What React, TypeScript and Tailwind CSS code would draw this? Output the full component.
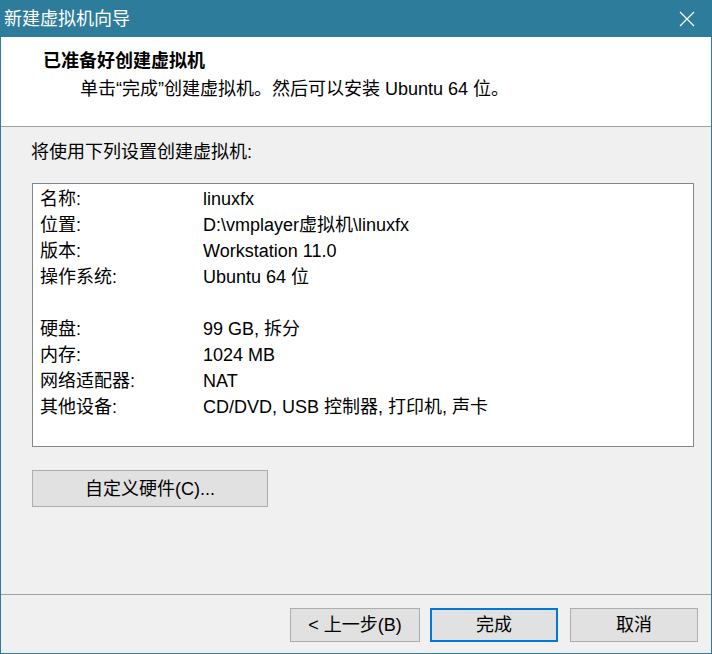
import React from "react";

const font = {
  fontFamily: '"Liberation Sans", "Noto Sans CJK SC", sans-serif',
};

const rows: [string, string][] = [
  ["名称:", "linuxfx"],
  ["位置:", "D:\\vmplayer虚拟机\\linuxfx"],
  ["版本:", "Workstation 11.0"],
  ["操作系统:", "Ubuntu 64 位"],
  ["", ""],
  ["硬盘:", "99 GB, 拆分"],
  ["内存:", "1024 MB"],
  ["网络适配器:", "NAT"],
  ["其他设备:", "CD/DVD, USB 控制器, 打印机, 声卡"],
];

export default function App() {
  return (
    <div
      className="w-[712px] h-[654px] flex flex-col bg-[#f0f0f0] border-x border-b border-[#2e7c9b] text-black text-[18px] overflow-hidden"
      style={font}
    >
      {/* Title bar */}
      <div className="h-[37px] -mx-px bg-[#2e7c9b] flex items-center justify-between shrink-0">
        <span className="pl-[4px] text-white leading-[26px]">新建虚拟机向导</span>
        <svg width="16" height="16" viewBox="0 0 16 16" className="mr-[17px]">
          <path d="M1 1 L15 15 M15 1 L1 15" stroke="white" strokeWidth="1.2" fill="none" />
        </svg>
      </div>

      {/* Header */}
      <div className="h-[89px] bg-white shrink-0 pt-[11px] leading-[26px]">
        <div className="pl-[42px] font-bold">已准备好创建虚拟机</div>
        <div className="pl-[79px] mt-[2px]">单击“完成”创建虚拟机。然后可以安装 Ubuntu 64 位。</div>
      </div>
      <div className="h-px bg-[#a0a0a0] shrink-0" />

      {/* Body */}
      <div className="flex-1 flex flex-col pl-[31px] pt-[12px]">
        <div className="leading-[26px] -ml-px">将使用下列设置创建虚拟机:</div>
        <div className="mt-[18px] w-[662px] h-[264px] bg-white border border-[#828790] pt-[2px] pl-[7px]">
          <div className="grid grid-cols-[163px_1fr] leading-[26px]">
            {rows.map(([k, v], i) => (
              <React.Fragment key={i}>
                <div className="h-[26px]">{k}</div>
                <div className="h-[26px]">{v}</div>
              </React.Fragment>
            ))}
          </div>
        </div>
        <button className="mt-[23px] w-[236px] h-[37px] bg-[#e1e1e1] border border-[#adadad] flex items-center justify-center leading-[26px]">
          自定义硬件(C)...
        </button>
      </div>

      {/* Footer */}
      <div className="h-px bg-[#a0a0a0] shrink-0" />
      <div className="h-[58px] shrink-0 flex items-start justify-end pt-[13px] pr-[13px]">
        <button className="w-[130px] h-[34px] bg-[#e1e1e1] border border-[#adadad] flex items-center justify-center leading-[26px]">
          &lt; 上一步(B)
        </button>
        <button className="ml-[10px] w-[128px] h-[34px] bg-[#e1e1e1] border-2 border-[#0078d7] flex items-center justify-center leading-[26px]">
          完成
        </button>
        <button className="ml-[12px] w-[128px] h-[34px] bg-[#e1e1e1] border border-[#adadad] flex items-center justify-center leading-[26px]">
          取消
        </button>
      </div>
    </div>
  );
}
